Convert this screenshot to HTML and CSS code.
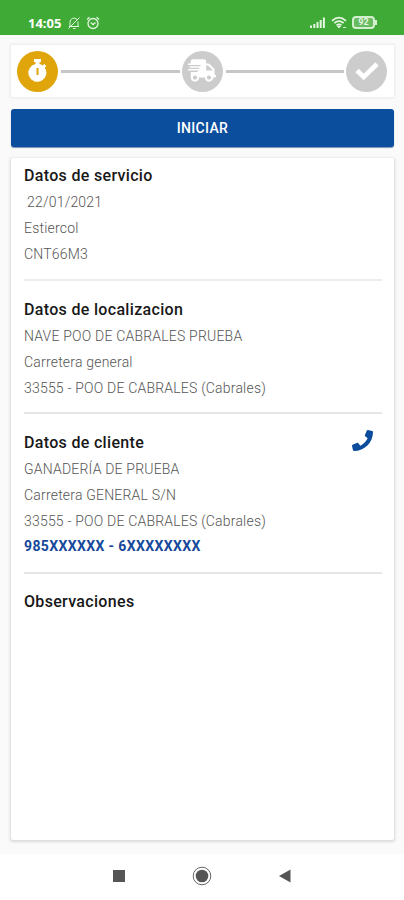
FILE: index.html
```html
<!DOCTYPE html>
<html lang="es">
	<head>
		<title>Datos de servicio</title>
		<meta charset="utf-8" />
		<meta name="viewport" content="width=device-width, initial-scale=1" />
		<link rel="stylesheet" href="styles.css">
	</head>
	<body>
		<header class="statusbar">
			<span class="clock">14:05</span>
			<svg class="mute" width="14" height="14" viewBox="0 0 14 14" fill="none" stroke="currentColor">
				<path d="M3 10.5V6.5a4 4 0 0 1 7-3M11 5.500V10.500M2 10.500h10M6 12.500h2.500M1.500 12.500L12.500 1.500"/>
			</svg>
			<svg class="alarm" width="14" height="14" viewBox="0 0 14 14" fill="none" stroke="currentColor" stroke-width="1.300">
				<circle cx="7" cy="7.500" r="5"/>
				<path d="M1 3.500L3.500 1.200M13 3.500L10.500 1.200M4.800 6.500L7 8.600L9.500 6.500"/>
			</svg>
			<svg class="signal" width="16" height="13" viewBox="0 0 16 13" fill="currentColor">
				<path d="M0 9.500h2V12H0zM3.300 8h2v4h-2zM6.500 6h2v6h-2zM9.700 4h2v8h-2zM12.900 1.500h2V12h-2z"/>
			</svg>
			<svg class="wifi" width="17" height="14" viewBox="0 0 17 14" fill="none" stroke="currentColor" stroke-width="1.700">
				<path d="M1 4.800Q8 -1.500 15 4.800M3.300 7.200Q8 3 12.700 7.200M5.500 9.400Q8 7.500 10.500 9.400"/>
				<path d="M6.500 10.300h3L8 12zM12 11.500h3" fill="currentColor" stroke-width="1"/>
			</svg>
			<span class="battery">92</span>
		</header>
		<main>
			<div class="steps">
				<span class="step active">
					<svg width="22" height="26" viewBox="0 0 22 26">
						<path fill="#fff" d="M7 1h7v3h-1.500v2a8 8 0 0 1 3.300 1.500l1.500-1.500 2 2-1.500 1.700A9 9 0 1 1 8.500 6V4H7z"/>
						<path class="hand" d="M10.500 10v7"/>
					</svg>
				</span>
				<span class="line"></span>
				<span class="step">
					<svg class="truck" width="28" height="23" viewBox="0 0 640 512">
						<path fill="#fff" d="M624 352h-16V243.900c0-12.700-5.100-24.900-14.100-33.900L494 110.100c-9-9-21.200-14.100-33.900-14.100H416V48c0-26.500-21.500-48-48-48H112C85.500 0 64 21.500 64 48v48H8c-4.400 0-8 3.600-8 8v16c0 4.400 3.600 8 8 8h272c4.400 0 8 3.600 8 8v16c0 4.400-3.600 8-8 8H40c-4.400 0-8 3.600-8 8v16c0 4.400 3.600 8 8 8h208c4.400 0 8 3.600 8 8v16c0 4.400-3.600 8-8 8H8c-4.400 0-8 3.600-8 8v16c0 4.400 3.600 8 8 8h208c4.400 0 8 3.600 8 8v16c0 4.400-3.600 8-8 8H64v128c0 53 43 96 96 96s96-43 96-96h128c0 53 43 96 96 96s96-43 96-96h48c8.800 0 16-7.200 16-16v-32c0-8.800-7.200-16-16-16zM160 464c-26.500 0-48-21.500-48-48s21.500-48 48-48 48 21.500 48 48-21.500 48-48 48zm320 0c-26.500 0-48-21.500-48-48s21.500-48 48-48 48 21.500 48 48-21.500 48-48 48zm80-208H416V144h44.100l99.900 99.900V256z"/>
					</svg>
				</span>
				<span class="line"></span>
				<span class="step">
					<svg width="24" height="20" viewBox="0 0 24 20" fill="none" stroke="#fff" stroke-width="4.600">
						<path d="M2 9.500L8.700 16L22 3"/>
					</svg>
				</span>
			</div>
			<button class="start">INICIAR</button>
			<div class="card">
				<section class="service">
					<h3>Datos de servicio</h3>
					<p class="date">22/01/2021</p>
					<p>Estiercol</p>
					<p>CNT66M3</p>
				</section>
				<section class="place">
					<h3>Datos de localizacion</h3>
					<p>NAVE POO DE CABRALES PRUEBA</p>
					<p>Carretera general</p>
					<p>33555 - POO DE CABRALES (Cabrales)</p>
				</section>
				<section class="client">
					<div class="heading">
						<h3>Datos de cliente</h3>
						<svg class="call" width="21" height="21" viewBox="0 0 512 512">
							<path d="M493.400 24.600l-104-24c-11.300-2.600-22.900 3.300-27.500 13.900l-48 112c-4.200 9.800-1.400 21.300 6.900 28l60.600 49.600c-36 76.700-98.900 140.500-177.200 177.200l-49.600-60.600c-6.800-8.300-18.200-11.100-28-6.900l-112 48C3.900 366.500-2 378.100.6 389.400l24 104C27.100 504.200 36.700 512 48 512c256.100 0 464-207.500 464-464 0-11.200-7.700-20.900-18.600-23.400z"/>
						</svg>
					</div>
					<p>GANADERÍA DE PRUEBA</p>
					<p>Carretera GENERAL S/N</p>
					<p>33555 - POO DE CABRALES (Cabrales)</p>
					<p class="phones">985XXXXXX - 6XXXXXXXX</p>
				</section>
				<section class="notes">
					<h3>Observaciones</h3>
				</section>
			</div>
		</main>
		<nav class="navbar">
			<svg width="20" height="20" viewBox="0 0 20 20"><path fill="#555" d="M4 4h12v12H4z"/></svg>
			<svg width="20" height="20" viewBox="0 0 20 20">
				<circle cx="10" cy="10" r="8.800" fill="none" stroke="#666"/>
				<circle cx="10" cy="10" r="6.300" fill="#555"/>
			</svg>
			<svg width="20" height="20" viewBox="0 0 20 20"><path fill="#555" d="M4 10l11.500-6.500v13z"/></svg>
		</nav>
	</body>
</html>
```

FILE: styles.css
```css
* {
	box-sizing: border-box;
}
body {
	margin: 0;
	height: 100vh;
	display: flex;
	flex-direction: column;
	overflow: hidden;
	font-family: Roboto, sans-serif;
	background: #fafafa;
}
h3, p {
	margin: 0;
}
svg {
	display: block;
	flex: none;
}

.statusbar {
	display: flex;
	align-items: center;
	height: 35px;
	padding: 10px 29px 0 28px;
	background: #3fab36;
	color: #e4f5e2;
}
.clock {
	width: 34px;
	margin-right: 5px;
	font: bold 13px "Open Sans", sans-serif;
	color: #fff;
}
.alarm {
	margin-left: 5px;
}
.signal {
	margin-left: auto;
}
.wifi {
	margin: 0 4px 0 5px;
}
.battery {
	position: relative;
	width: 23px;
	height: 13px;
	border: 2px solid #d3efd0;
	border-radius: 4px;
	background: #68bb61;
	font-size: 9px;
	font-weight: bold;
	line-height: 9px;
	text-align: center;
}
.battery::after {
	content: "";
	position: absolute;
	right: -4px;
	top: 2px;
	width: 2px;
	height: 5px;
	background: #d3efd0;
}

main {
	flex: 1;
	display: flex;
	flex-direction: column;
	padding: 10px 10px 14px 11px;
}
.steps {
	display: flex;
	align-items: center;
	height: 52px;
	padding: 0 7px 0 6px;
	background: #fff;
	box-shadow: 0 0 2px 1px #eaeaea;
}
.step {
	display: flex;
	align-items: center;
	justify-content: center;
	width: 41px;
	height: 41px;
	border-radius: 50%;
	background: #ccc;
}
.step.active {
	background: #e0a50a;
}
.truck {
	margin-bottom: 2px;
}
.hand {
	stroke: #e0a50a;
	stroke-width: 2;
}
.line {
	flex: 1;
	height: 3px;
	margin: 0 2px 0 3px;
	background: #c6c6c6;
}

.start {
	height: 38px;
	margin: 12px 0 11px;
	padding: 0;
	border: 0;
	border-radius: 3px;
	background: #0b4e9e;
	box-shadow: 0 1px 1px #7692b5;
	font: 500 14px Roboto, sans-serif;
	letter-spacing: 0.3px;
	color: #fff;
}

.card {
	flex: 1;
	padding: 0 12px 0 13px;
	background: #fff;
	border-radius: 2px;
	box-shadow: 0 1px 3px 1px #d9d9d9;
}
section {
	border-bottom: 2px solid #e6e6e6;
}
.service {
	height: 123px;
	padding-top: 4px;
	border-color: #ececec;
}
.place {
	height: 133px;
	padding-top: 15px;
}
.client {
	height: 160px;
	padding-top: 15px;
}
.notes {
	padding-top: 14px;
	border: 0;
}
h3 {
	font-size: 16px;
	font-weight: 500;
	line-height: 28px;
	letter-spacing: 0.32px;
	color: #181818;
}
p {
	font-size: 14px;
	font-weight: 300;
	line-height: 25.8px;
	letter-spacing: 0.2px;
	color: #555;
}
.date {
	padding-left: 3px;
}
.phones {
	font-weight: bold;
	letter-spacing: 0.37px;
	color: #16499a;
}
.heading {
	display: flex;
	justify-content: space-between;
	padding-right: 9px;
}
.call {
	margin-top: 1px;
	fill: #0b4c9c;
}

.navbar {
	display: flex;
	align-items: center;
	justify-content: center;
	gap: 63px;
	height: 46px;
	padding-bottom: 2px;
	background: #fff;
}
```
